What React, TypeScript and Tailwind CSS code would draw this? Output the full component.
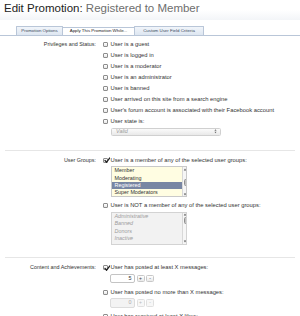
import React from 'react';

const Check = ({ checked = false }: { checked?: boolean }) => (
  <span className="relative inline-block w-[5px] h-[5px] shrink-0 rounded-[1px] border-[0.5px] border-[#8d8d8d] bg-gradient-to-b from-white to-[#e6e6e6]">
    {checked && (
      <svg viewBox="0 0 10 10" className="absolute -left-[0.5px] -top-[1.5px] w-[6.5px] h-[6.5px]">
        <path d="M1.5 5.2 L4 8 L9 1.5" fill="none" stroke="#222" strokeWidth="2" strokeLinecap="round" strokeLinejoin="round" />
      </svg>
    )}
  </span>
);

const CheckRow = ({ label, text, checked }: { label?: string; text: string; checked?: boolean }) => (
  <div className="flex items-center h-[11px]">
    <div className="w-[91px] shrink-0 text-right text-[#333] whitespace-nowrap">{label}</div>
    <div className="flex items-center pl-[7px] min-w-0">
      <Check checked={checked} />
      <span className="ml-[2.5px] whitespace-nowrap text-[#333] text-[5.8px]">{text}</span>
    </div>
  </div>
);

const Indent = ({ children, className = '' }: { children: React.ReactNode; className?: string }) => (
  <div className={`flex ${className}`}>
    <div className="w-[91px] shrink-0" />
    <div className="pl-[15px]">{children}</div>
  </div>
);

const Scrollbar = ({ thumbTop }: { thumbTop: number }) => (
  <div className="relative w-[4px] h-full border-l-[0.5px] border-[#d8d8d8] bg-[#f6f6f6]">
    <svg viewBox="0 0 4 3" className="absolute top-[0.5px] left-0 w-[4px] h-[3px]">
      <path d="M2 0.5 L3.2 2.5 L0.8 2.5 Z" fill="#555" />
    </svg>
    <div
      className="absolute left-[0.5px] w-[3px] h-[7px] rounded-[1.5px] bg-gradient-to-r from-[#d9d9d9] to-[#a9a9a9] border-[0.5px] border-[#8f8f8f]"
      style={{ top: thumbTop }}
    />
    <svg viewBox="0 0 4 3" className="absolute bottom-[0.5px] left-0 w-[4px] h-[3px]">
      <path d="M2 2.5 L3.2 0.5 L0.8 0.5 Z" fill="#555" />
    </svg>
  </div>
);

const Spinner = ({ value, disabled }: { value: string; disabled?: boolean }) => (
  <div className="flex items-center gap-[1.5px] h-[9.5px]">
    <div
      className={`w-[25px] h-[9.5px] rounded-[2px] border-[0.5px] flex items-center justify-end pr-[2.5px] ${
        disabled ? 'bg-[#f3f3f3] border-[#dcdcdc] text-[#aaa]' : 'bg-white border-[#c4c4c4] text-[#333]'
      }`}
    >
      {value}
    </div>
    {['+', '-'].map((s) => (
      <div
        key={s}
        className={`w-[8px] h-[7.5px] rounded-[1.5px] border-[0.5px] flex items-center justify-center text-[5px] leading-none ${
          disabled ? 'border-[#e0e0e0] text-[#bbb] bg-[#f7f7f7]' : 'border-[#c8c8c8] text-[#444] bg-gradient-to-b from-white to-[#e9e9e9]'
        }`}
      >
        {s}
      </div>
    ))}
  </div>
);

const tabBase = 'h-[8.5px] px-[2.5px] flex items-center text-[4.4px] whitespace-nowrap';
const tabIdle = `${tabBase} text-[#3a4a5c] bg-gradient-to-b from-[#f1f5fa] to-[#dde6f1] border-[0.5px] border-b-0 border-[#b9c6d8] rounded-t-[1px]`;

export default function App() {
  const groups = ['Member', 'Moderating', 'Registered', 'Super Moderators'];
  const notGroups = ['Administrative', 'Banned', 'Donors', 'Inactive'];

  return (
    <div className="w-[300px] h-[316px] overflow-hidden bg-white font-['Liberation_Sans',Arial,sans-serif] text-[5.4px] leading-none">
      {/* title */}
      <div className="h-[20px] px-[4px] pt-[1px] bg-gradient-to-b from-white via-white to-[#f3f5f8]">
        <h1 className="text-[11.5px] leading-[14px] whitespace-nowrap">
          <span className="text-[#222]">Edit Promotion:</span>{' '}
          <span className="text-[#6e6e6e]">Registered to Member</span>
        </h1>
      </div>

      {/* tabs */}
      <div className="pt-[6px] pl-[16px] border-b-[0.5px] border-[#b9c6d8] flex items-end">
        <div className={`${tabIdle} w-[47px] justify-center`}>Promotion Options</div>
        <div className={`${tabBase} w-[71px] justify-center text-[#222] bg-white border-t-[0.5px] border-[#b9c6d8] -mb-[0.5px] relative`}>
          Apply This Promotion While...
        </div>
        <div className={`${tabIdle} w-[70px] justify-center`}>Custom User Field Criteria</div>
      </div>

      <div className="px-[5px]">
        {/* privileges */}
        <div className="pt-[4px] pb-[14px] border-b border-[#e6e6e6]">
          <CheckRow label="Privileges and Status:" text="User is a guest" />
          <CheckRow text="User is logged in" />
          <CheckRow text="User is a moderator" />
          <CheckRow text="User is an administrator" />
          <CheckRow text="User is banned" />
          <CheckRow text="User arrived on this site from a search engine" />
          <CheckRow text="User's forum account is associated with their Facebook account" />
          <CheckRow text="User state is:" />
          <Indent>
            <div className="w-[110px] h-[8px] rounded-[1.5px] border-[0.5px] border-[#d0d0d0] bg-gradient-to-b from-[#fbfbfb] to-[#e9e9e9] flex items-center justify-between pl-[4px] pr-[3px]">
              <span className="italic text-[#9a9a9a]">Valid</span>
              <svg viewBox="0 0 4 6" className="w-[3px] h-[4.5px]">
                <path d="M2 0.3 L3.4 2.4 L0.6 2.4 Z M2 5.7 L3.4 3.6 L0.6 3.6 Z" fill="#666" />
              </svg>
            </div>
          </Indent>
        </div>

        {/* user groups */}
        <div className="pt-[4.5px] pb-[12.5px] border-b border-[#e6e6e6]">
          <CheckRow label="User Groups:" text="User is a member of any of the selected user groups:" checked />
          <Indent>
            <div className="w-[76px] h-[31px] border-[0.5px] border-[#c9c9c9] bg-[#fffde2] flex overflow-hidden">
              <div className="flex-1 pt-[0.5px]">
                {groups.map((g) => (
                  <div
                    key={g}
                    className={`h-[7.25px] flex items-center pl-[2.5px] whitespace-nowrap ${
                      g === 'Registered' ? 'bg-[#7886a3] text-white' : 'text-[#333]'
                    }`}
                  >
                    {g}
                  </div>
                ))}
              </div>
              <Scrollbar thumbTop={12} />
            </div>
          </Indent>
          <div className="mt-[3.5px]">
            <CheckRow text="User is NOT a member of any of the selected user groups:" />
          </div>
          <Indent>
            <div className="w-[76px] h-[33px] border-[0.5px] border-[#d3d3d3] bg-[#f2f2f2] flex overflow-hidden">
              <div className="flex-1 pt-[0.5px]">
                {notGroups.map((g) => (
                  <div key={g} className="h-[7.4px] flex items-center pl-[2.5px] italic text-[#9c9c9c] whitespace-nowrap">
                    {g}
                  </div>
                ))}
              </div>
              <Scrollbar thumbTop={4} />
            </div>
          </Indent>
        </div>

        {/* content */}
        <div className="pt-[4.5px]">
          <CheckRow label="Content and Achievements:" text="User has posted at least X messages:" checked />
          <Indent className="-ml-[1px]">
            <Spinner value="5" />
          </Indent>
          <div className="mt-[4px]">
            <CheckRow text="User has posted no more than X messages:" />
          </div>
          <Indent className="-ml-[1px]">
            <Spinner value="0" disabled />
          </Indent>
          <div className="mt-[3.5px]">
            <CheckRow text="User has received at least X likes:" />
          </div>
        </div>
      </div>
    </div>
  );
}
